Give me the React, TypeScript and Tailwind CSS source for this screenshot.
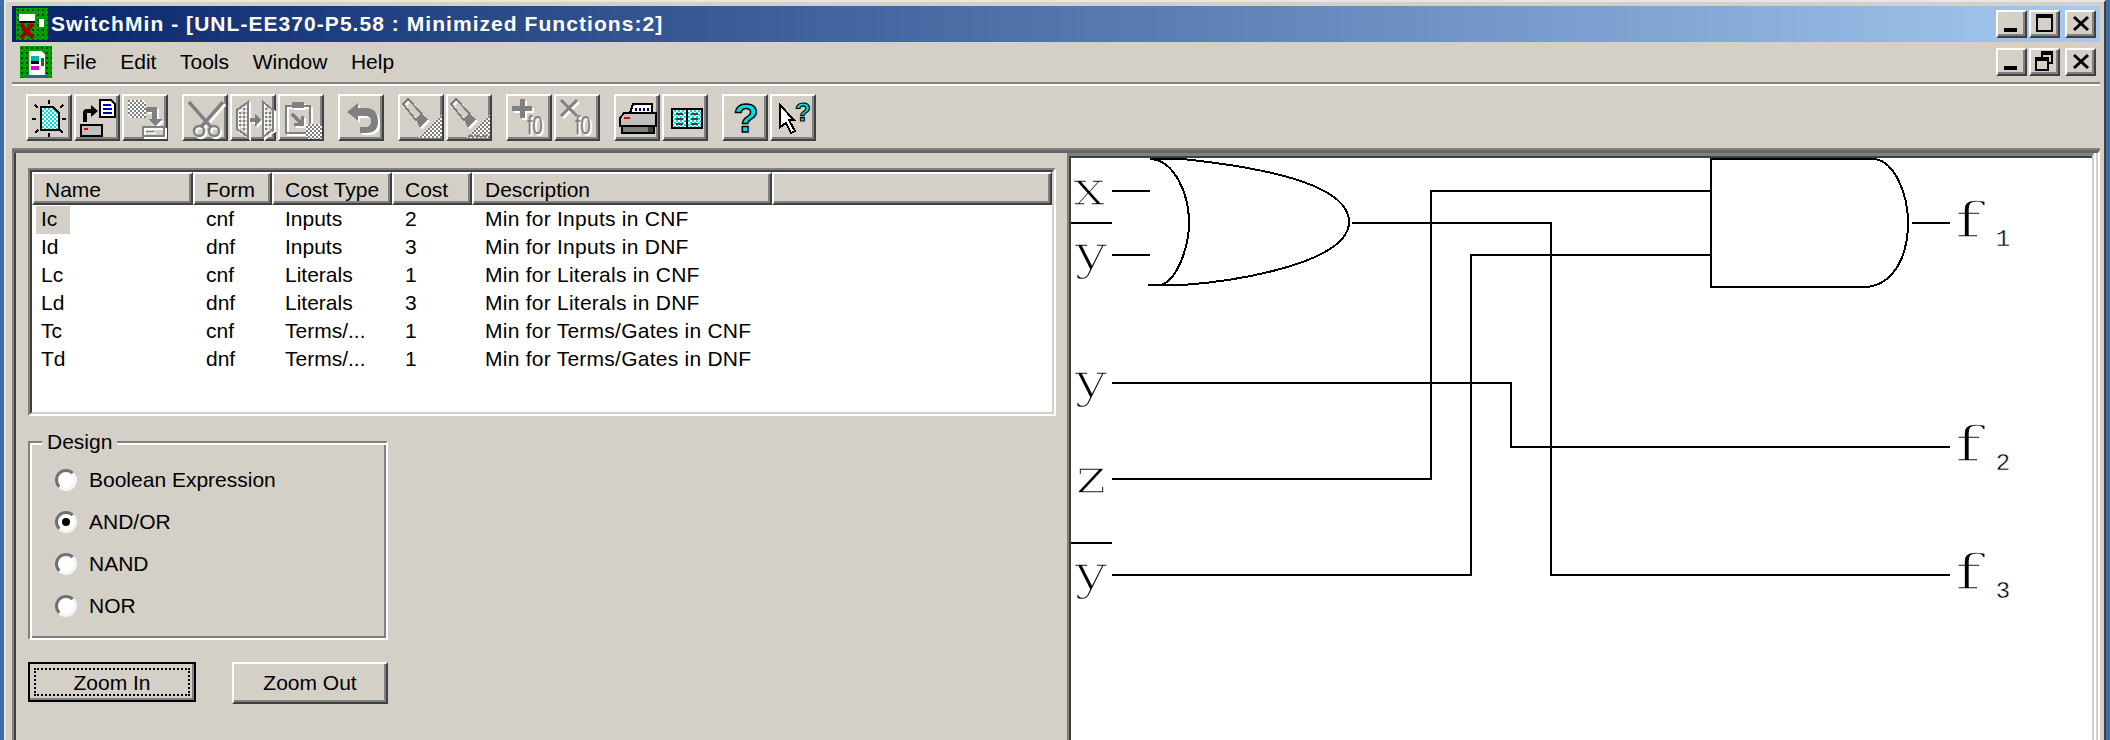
import type { ReactNode } from "react";

const RAISED =
  "border-2 border-t-white border-l-white border-r-[#404040] border-b-[#404040] bg-[#d4d0c8] shadow-[inset_-2px_-2px_0_#808080]";

const COLUMNS = ["Name", "Form", "Cost Type", "Cost", "Description", ""];

const ROWS = [
  ["Ic", "cnf", "Inputs", "2", "Min for Inputs in CNF"],
  ["Id", "dnf", "Inputs", "3", "Min for Inputs in DNF"],
  ["Lc", "cnf", "Literals", "1", "Min for Literals in CNF"],
  ["Ld", "dnf", "Literals", "3", "Min for Literals in DNF"],
  ["Tc", "cnf", "Terms/...", "1", "Min for Terms/Gates in CNF"],
  ["Td", "dnf", "Terms/...", "1", "Min for Terms/Gates in DNF"],
];

const DESIGNS = ["Boolean Expression", "AND/OR", "NAND", "NOR"];

// Greyed-out toolbar art: same shape twice, white offset under grey
function Disabled({ children }: { children: ReactNode }) {
  return (
    <>
      <g fill="#fff" stroke="#fff" transform="translate(2 2)">
        {children}
      </g>
      <g fill="#808080" stroke="#808080">
        {children}
      </g>
    </>
  );
}

function Defs() {
  return (
    <svg width="0" height="0" className="absolute">
      <defs>
        <pattern id="cyan" width="4" height="4" patternUnits="userSpaceOnUse">
          <rect width="4" height="4" fill="#fff" />
          <rect width="2" height="2" fill="#00e0e0" />
          <rect x="2" y="2" width="2" height="2" fill="#00e0e0" />
        </pattern>
        <pattern id="grey" width="4" height="4" patternUnits="userSpaceOnUse">
          <rect width="4" height="4" fill="#fff" />
          <rect width="2" height="2" fill="#808080" />
          <rect x="2" y="2" width="2" height="2" fill="#808080" />
        </pattern>
        <pattern id="green" width="5" height="5" patternUnits="userSpaceOnUse">
          <rect width="5" height="5" fill="#00a000" />
          <rect x="1" y="1" width="2" height="2" fill="#004000" />
        </pattern>
      </defs>
    </svg>
  );
}

function NewIcon() {
  return (
    <g shapeRendering="crispEdges">
      <path d="M15 13H27L33 19V36H15Z" fill="url(#cyan)" stroke="#000" strokeWidth="2" />
      <path d="M23 6V10M23 39V43M6 25H10M36 25H40M9 11L12 14M37 11L34 14M9 39L12 36M37 39L34 36" stroke="#000" strokeWidth="2" fill="none" />
    </g>
  );
}

function OpenIcon() {
  return (
    <g shapeRendering="crispEdges">
      <path d="M9 28V19Q9 15 13 15H17V11L24 17L17 23V19H13V28Z" fill="#000" shapeRendering="auto" />
      <path d="M26 6H37L41 10V23H26Z" fill="#fff" stroke="#000" strokeWidth="2" />
      <path d="M29 11H37M29 15H38M29 19H38" stroke="#0000a0" strokeWidth="2" />
      <rect x="7" y="31" width="21" height="11" fill="#c0c0c0" stroke="#000" strokeWidth="2" />
      <rect x="10" y="34" width="4" height="2" fill="#e00000" />
    </g>
  );
}

function SaveIcon() {
  return (
    <g shapeRendering="crispEdges">
      <Disabled>
        <rect x="6" y="6" width="16" height="16" fill="url(#grey)" strokeWidth="0" />
        <path d="M24 13H35V25H40L33 32L26 25H30V18H24Z" strokeWidth="0" />
        <rect x="21" y="33" width="21" height="9" fillOpacity="0" strokeWidth="2" />
        <rect x="24" y="37" width="8" height="1" strokeWidth="0" />
      </Disabled>
    </g>
  );
}

function CutIcon() {
  return (
    <Disabled>
      <path d="M7 8L29 33M41 8L19 33" fill="none" strokeWidth="3.5" />
      <circle cx="17" cy="37" r="5" fillOpacity="0" strokeWidth="2.5" />
      <circle cx="32" cy="37" r="5" fillOpacity="0" strokeWidth="2.5" />
    </Disabled>
  );
}

function CopyIcon() {
  return (
    <g shapeRendering="crispEdges">
      <Disabled>
        <path d="M18 8V43L7 35V16Z" fillOpacity="0" strokeWidth="2" />
        <path d="M33 8V43L43 35V16Z" fillOpacity="0" strokeWidth="2" />
        <path d="M10 18V34M14 14V38M36 14V38M40 18V34" fill="none" strokeWidth="2" strokeDasharray="2 2" />
        <path d="M20 24H25V20L31 26L25 32V28H20Z" strokeWidth="0" />
      </Disabled>
    </g>
  );
}

function PasteIcon() {
  return (
    <g shapeRendering="crispEdges">
      <Disabled>
        <path d="M8 12H32V39H8Z" fillOpacity="0" strokeWidth="2" />
        <rect x="14" y="8" width="12" height="6" strokeWidth="0" />
        <path d="M14 20L24 30M24 22V30H16" fill="none" strokeWidth="3" />
        <rect x="28" y="30" width="14" height="13" fill="url(#grey)" strokeWidth="0" />
      </Disabled>
    </g>
  );
}

function UndoIcon() {
  return (
    <Disabled>
      <path
        d="M9 18L20 9V14H28Q40 14 40 28Q40 39 28 39H22V33H27Q33 33 33 27Q33 22 27 22H20V27Z"
        strokeWidth="0"
      />
    </Disabled>
  );
}

function BrushIcon({ band }: { band?: boolean }) {
  return (
    <g shapeRendering="crispEdges">
      <Disabled>
        <path d="M5 10L10 5L24 20L18 26Z" fillOpacity="0" strokeWidth="2" />
        <path d="M18 26L24 20L30 25L22 34Z" strokeWidth="0" />
      </Disabled>
      <path d="M44 21V44H20Z" fill="url(#grey)" />
      {band && <path d="M22 42H44" stroke="#808080" strokeWidth="2" strokeDasharray="5 2" />}
    </g>
  );
}

function FunctionIcon({ mark }: { mark: "add" | "del" }) {
  return (
    <Disabled>
      {mark === "add" ? (
        <path d="M6 14H26M16 5V24" fill="none" strokeWidth="5" shapeRendering="crispEdges" />
      ) : (
        <path d="M7 6L23 22M23 6L7 22" fill="none" strokeWidth="3" />
      )}
      <text
        transform="translate(21 40) scale(0.85 1.15)"
        fontFamily="Liberation Sans"
        fontSize="22"
        strokeWidth="0"
      >
        f0
      </text>
    </Disabled>
  );
}

function PrintIcon() {
  return (
    <g shapeRendering="crispEdges">
      <path d="M16 19L19 10H38V19Z" fill="#fff" stroke="#000" strokeWidth="2" />
      <path d="M21 15H35" stroke="#000080" strokeWidth="3" strokeDasharray="2 2" />
      <path d="M6 24L10 19H42V32H6Z" fill="#c0c0c0" stroke="#000" strokeWidth="2" />
      <rect x="10" y="23" width="6" height="2" fill="#e00000" />
      <rect x="8" y="32" width="32" height="7" fill="#808080" stroke="#000" strokeWidth="2" />
      <rect x="34" y="33" width="5" height="5" fill="#404040" />
    </g>
  );
}

function BookIcon() {
  return (
    <g shapeRendering="crispEdges">
      <rect x="10" y="15" width="30" height="19" fill="url(#cyan)" stroke="#000" strokeWidth="2" />
      <path d="M25 15V34" stroke="#000" strokeWidth="2" />
      <path d="M14 20H21M14 25H21M14 30H21M29 20H36M29 25H36M29 30H36" stroke="#404040" strokeWidth="1.5" />
    </g>
  );
}

function HelpIcon() {
  return (
    <text
      x="24"
      y="38"
      textAnchor="middle"
      fontFamily="Liberation Sans"
      fontWeight="700"
      fontSize="41"
      fill="#00e0e0"
      stroke="#000"
      strokeWidth="1.5"
    >
      ?
    </text>
  );
}

function PointerHelpIcon() {
  return (
    <>
      <path
        d="M10 11L24 26H19L25 37L21 39L16 29L10 33Z"
        fill="#fff"
        stroke="#000"
        strokeWidth="2"
        shapeRendering="crispEdges"
      />
      <text
        x="33"
        y="27"
        textAnchor="middle"
        fontFamily="Liberation Sans"
        fontWeight="700"
        fontSize="26"
        fill="#00e0e0"
        stroke="#000"
        strokeWidth="1.2"
      >
        ?
      </text>
    </>
  );
}

function ToolButton({ children }: { children: ReactNode }) {
  return (
    <div className={`h-[47px] w-[46px] ${RAISED} relative`}>
      <svg width="46" height="47" viewBox="0 0 46 47" className="absolute -top-[2px] -left-[2px]">
        {children}
      </svg>
    </div>
  );
}

function ToolGroup({ children }: { children: ReactNode }) {
  return <div className="flex gap-[2px]">{children}</div>;
}

function WindowButton({ kind }: { kind: "min" | "max" | "restore" | "close" }) {
  return (
    <div className={`relative h-[28px] w-[31px] ${RAISED}`}>
      <svg width="31" height="28" viewBox="0 0 31 28" className="absolute -top-[2px] -left-[2px]" shapeRendering="crispEdges">
        {kind === "min" && <rect x="8" y="18" width="13" height="4" fill="#000" />}
        {kind === "max" && (
          <path d="M7 4H24V22H7ZM9 8V20H22V8Z" fill="#000" fillRule="evenodd" />
        )}
        {kind === "restore" && (
          <>
            <path d="M12 3H24V16H20V14H22V7H14V9H12Z" fill="#000" />
            <path d="M6 9H20V23H6ZM8 13V21H18V13Z" fill="#000" fillRule="evenodd" />
          </>
        )}
        {kind === "close" && (
          <path d="M9 7L23 20M23 7L9 20" stroke="#000" strokeWidth="3" shapeRendering="auto" />
        )}
      </svg>
    </div>
  );
}

function WindowButtons({ middle }: { middle: "max" | "restore" }) {
  return (
    <div className="ml-auto flex">
      <WindowButton kind="min" />
      <div className="ml-[2px]">
        <WindowButton kind={middle} />
      </div>
      <div className="ml-[5px]">
        <WindowButton kind="close" />
      </div>
    </div>
  );
}

function AppIcon() {
  return (
    <svg width="32" height="32" viewBox="0 0 32 32" shapeRendering="crispEdges" className="shrink-0">
      <rect width="32" height="32" fill="url(#green)" />
      <rect x="3" y="6" width="16" height="7" fill="#fff" />
      <rect x="3" y="13" width="16" height="2" fill="#000" />
      <path d="M5 16L17 30M17 16L5 30" stroke="#a00000" strokeWidth="4" shapeRendering="auto" />
      <rect x="23" y="11" width="5" height="8" fill="#fff" />
    </svg>
  );
}

function DocIcon() {
  return (
    <svg width="32" height="32" viewBox="0 0 32 32" shapeRendering="crispEdges" className="shrink-0">
      <rect width="32" height="32" fill="url(#green)" />
      <path d="M9 5H21L25 9V29H9Z" fill="#fff" />
      <rect x="11" y="10" width="8" height="5" fill="#00b0c0" />
      <rect x="11" y="15" width="8" height="3" fill="#000" />
      <rect x="11" y="20" width="8" height="4" fill="#e000e0" />
      <rect x="21" y="12" width="3" height="8" fill="#008000" />
      <rect x="5" y="29" width="22" height="3" fill="#207070" />
    </svg>
  );
}

// Gate labels: a white stroke over the glyph thins it to the hairline of the original
function Label({
  text,
  x,
  y,
  size = 48,
  sx = 1.22,
  thin = 1.7,
  family = "DejaVu Serif",
}: {
  text: string;
  x: number;
  y: number;
  size?: number;
  sx?: number;
  thin?: number;
  family?: string;
}) {
  return (
    <text
      transform={`translate(${x} ${y}) scale(${sx} 1)`}
      textAnchor="middle"
      fontFamily={family}
      fontSize={size}
      fill="#000"
      stroke="#fff"
      strokeWidth={thin}
    >
      {text}
    </text>
  );
}

function Sub({ text, y }: { text: string; y: number }) {
  return <Label text={text} x={2003} y={y} size={24} sx={1} thin={0.4} family="Liberation Mono" />;
}

function Diagram() {
  return (
    <svg width="1021" height="582" viewBox="1071 158 1021 582" className="block">
      <g fill="none" stroke="#000" strokeWidth="2" shapeRendering="crispEdges">
        {/* inputs */}
        <path d="M1112 191H1150M1070 223H1112M1112 255H1150M1070 543H1112" />
        {/* OR gate */}
        <path d="M1150 159H1182C1240 165 1349 180 1349 222C1349 262 1240 281 1182 285H1148" />
        <path d="M1150 159C1175 160 1189 195 1189 222C1189 250 1175 283 1160 285" />
        {/* AND gate */}
        <path d="M1875 159H1711V287H1868" />
        <path d="M1875 159C1895 162 1908 195 1908 222C1908 255 1895 283 1868 287" />
        {/* wires */}
        <path d="M1352 223H1551V575H1950" />
        <path d="M1112 479H1431V191H1711" />
        <path d="M1112 575H1471V255H1711" />
        <path d="M1112 383H1511V447H1950" />
        <path d="M1912 223H1950" />
      </g>
      <Label text="x" x={1089} y={205} />
      <Label text="y" x={1091} y={269} />
      <Label text="y" x={1091} y={397} />
      <Label text="z" x={1091} y={493} />
      <Label text="y" x={1091} y={589} />
      <Label text="f" x={1968} y={237} sx={1.5} />
      <Label text="f" x={1968} y={461} sx={1.5} />
      <Label text="f" x={1968} y={589} sx={1.5} />
      <Sub text="1" y={246} />
      <Sub text="2" y={470} />
      <Sub text="3" y={598} />
    </svg>
  );
}

function CostList() {
  const grid = "grid grid-cols-[161px_79px_120px_80px_300px_1fr]";
  return (
    <div className="h-[248px] w-[1028px] border-2 border-t-[#808080] border-l-[#808080] border-r-white border-b-white">
      <div className="h-full border-2 border-t-[#404040] border-l-[#404040] border-r-[#d4d0c8] border-b-[#d4d0c8] bg-white">
        <div className={grid}>
          {COLUMNS.map((label) => (
            <div key={label} className={`flex h-[33px] items-center pt-[2px] pl-[11px] ${RAISED}`}>
              {label}
            </div>
          ))}
        </div>
        <div className="pt-[1px]">
          {ROWS.map((row, i) => (
            <div key={row[0]} className={`${grid} h-[28px] items-start`}>
              {row.map((cell, j) => (
                <div key={j} className={j === 0 ? "pl-[4px]" : j === 4 ? "pl-[13px] tracking-[0.25px]" : "pl-[13px]"}>
                  <span
                    className={
                      j === 0
                        ? `block h-[28px] w-[34px] pl-[5px] leading-[25px] ${i === 0 ? "bg-[#d4d0c8]" : ""}`
                        : "block leading-[25px] whitespace-nowrap"
                    }
                  >
                    {cell}
                  </span>
                </div>
              ))}
            </div>
          ))}
        </div>
      </div>
    </div>
  );
}

function DesignGroup() {
  return (
    <div className="relative mt-[25px] h-[199px] w-[360px] border-2 border-t-[#808080] border-l-[#808080] border-r-white border-b-white pt-[16px] pl-[25px] shadow-[inset_2px_2px_0_#fff,inset_-2px_-2px_0_#808080]">
      <span className="absolute -top-[15px] left-[12px] bg-[#d4d0c8] px-[5px] leading-[28px]">Design</span>
      {DESIGNS.map((name) => (
        <div key={name} className="flex h-[42px] items-center gap-[12px]">
          <span className="flex h-[22px] w-[22px] items-center justify-center rounded-full border-[3px] border-t-[#707070] border-l-[#707070] border-r-[#f4f4f4] border-b-[#f4f4f4] bg-white">
            {name === "AND/OR" && <span className="h-[8px] w-[8px] rounded-full bg-black" />}
          </span>
          <span>{name}</span>
        </div>
      ))}
    </div>
  );
}

export default function App() {
  return (
    <div className="h-[740px] w-[2110px] overflow-hidden bg-[#3a6ea5] px-[4px] font-['Liberation_Sans',sans-serif] text-[21px] text-black">
      <Defs />
      <div className="flex h-full flex-col border-t-2 border-r-2 border-l-2 border-t-[#e8e6e0] border-r-[#404040] border-l-[#e8e6e0] bg-[#d4d0c8] pt-[4px] pr-[4px] pl-[6px]">
        {/* title bar */}
        <div className="flex h-[36px] shrink-0 items-center bg-linear-to-r from-[#0a246a] to-[#a6caf0] pr-[4px] pl-[4px]">
          <AppIcon />
          <span className="ml-[3px] font-bold tracking-[1.05px] whitespace-nowrap text-white">
            SwitchMin - [UNL-EE370-P5.58 : Minimized Functions:2]
          </span>
          <WindowButtons middle="max" />
        </div>

        {/* menu bar */}
        <div className="flex h-[40px] shrink-0 items-center pr-[4px] pl-[8px]">
          <DocIcon />
          <div className="-ml-[1px] flex">
            {["File", "Edit", "Tools", "Window", "Help"].map((item) => (
              <span key={item} className="px-[11.8px]">
                {item}
              </span>
            ))}
          </div>
          <WindowButtons middle="restore" />
        </div>

        {/* toolbar */}
        <div className="h-[68px] shrink-0 border-t-2 border-b-2 border-t-[#808080] border-b-[#808080] shadow-[inset_0_2px_0_#fff]">
          <div className="flex gap-[14px] pt-[10px] pl-[14px]">
            <ToolGroup>
              <ToolButton><NewIcon /></ToolButton>
              <ToolButton><OpenIcon /></ToolButton>
              <ToolButton><SaveIcon /></ToolButton>
            </ToolGroup>
            <ToolGroup>
              <ToolButton><CutIcon /></ToolButton>
              <ToolButton><CopyIcon /></ToolButton>
              <ToolButton><PasteIcon /></ToolButton>
            </ToolGroup>
            <ToolGroup>
              <ToolButton><UndoIcon /></ToolButton>
            </ToolGroup>
            <ToolGroup>
              <ToolButton><BrushIcon /></ToolButton>
              <ToolButton><BrushIcon band /></ToolButton>
            </ToolGroup>
            <ToolGroup>
              <ToolButton><FunctionIcon mark="add" /></ToolButton>
              <ToolButton><FunctionIcon mark="del" /></ToolButton>
            </ToolGroup>
            <ToolGroup>
              <ToolButton><PrintIcon /></ToolButton>
              <ToolButton><BookIcon /></ToolButton>
            </ToolGroup>
            <ToolGroup>
              <ToolButton><HelpIcon /></ToolButton>
              <ToolButton><PointerHelpIcon /></ToolButton>
            </ToolGroup>
          </div>
        </div>

        {/* client area */}
        <div className="flex min-h-0 flex-1 border-t-[3px] border-r-2 border-l-2 border-t-[#666666] border-r-white border-l-[#808080]">
          <div className="flex min-h-0 flex-1 border-l-2 border-[#404040]">
            <div className="flex w-[1051px] shrink-0 flex-col pt-[15px] pl-[12px]">
              <CostList />
              <DesignGroup />
              <div className="mt-[22px] flex items-start gap-[36px]">
                <button className="h-[40px] w-[168px] border-2 border-black">
                  <span className={`flex h-full w-full p-[4px] ${RAISED} border-t-0 border-l-0 border-r-0 border-b-0`}>
                    <span className="flex flex-1 items-center justify-center border-2 border-dotted border-black leading-none">
                      Zoom In
                    </span>
                  </span>
                </button>
                <button className={`h-[42px] w-[156px] ${RAISED}`}>Zoom Out</button>
              </div>
            </div>
            <div className="mr-[2px] flex-1 border-r-2 border-r-white">
              <div className="h-full border-t-[3px] border-r-2 border-l-2 border-t-[#808080] border-r-[#d4d0c8] border-l-[#808080]">
                <div className="h-full overflow-hidden border-t-2 border-l-2 border-[#404040] bg-white">
                  <Diagram />
                </div>
              </div>
            </div>
          </div>
        </div>
      </div>
    </div>
  );
}
